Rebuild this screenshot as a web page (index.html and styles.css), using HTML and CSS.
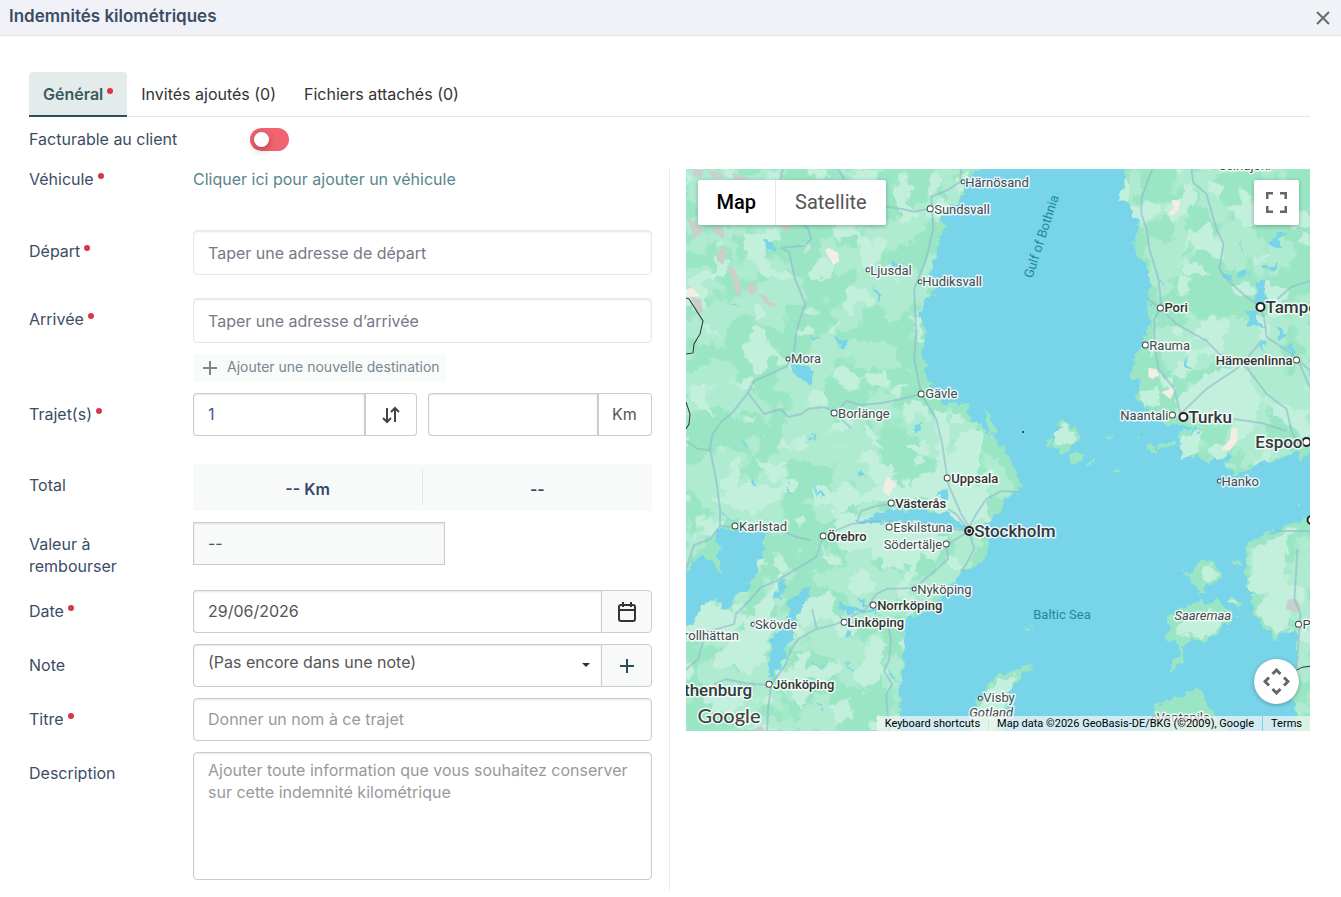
FILE: index.html
```html
<!DOCTYPE html>
<html lang="fr">

<head>
  <meta charset="UTF-8" />
  <meta name="viewport" content="width=device-width, initial-scale=1.0" />
  <title>Indemnités kilométriques</title>
  <link rel="stylesheet" href="styles.css">
</head>

<body>
  <header class="modal-header">
    <h1>Indemnités kilométriques</h1>
    <button type="button" class="close-btn" aria-label="Fermer">
      <svg width="14" height="14" viewBox="0 0 14 14"><path d="M1 1l12 12M13 1L1 13" /></svg>
    </button>
  </header>

  <main class="modal-body">
    <nav class="tabs">
      <a href="#general" class="tab active">Général<span class="required"></span></a>
      <a href="#invites" class="tab">Invités ajoutés (0)</a>
      <a href="#fichiers" class="tab">Fichiers attachés (0)</a>
    </nav>

    <div class="billable">
      <label for="billable">Facturable au client</label>
      <input type="checkbox" id="billable" class="switch" />
    </div>

    <div class="columns">
      <form class="form">
        <div class="row row-vehicle">
          <span class="label">Véhicule<span class="required"></span></span>
          <a href="#vehicule" class="add-vehicle">Cliquer ici pour ajouter un véhicule</a>
        </div>

        <div class="row row-address">
          <label class="label" for="start">Départ<span class="required"></span></label>
          <input type="text" id="start" class="control address" placeholder="Taper une adresse de départ" />
        </div>

        <div class="row">
          <label class="label" for="end">Arrivée<span class="required"></span></label>
          <div class="stack">
            <input type="text" id="end" class="control address" placeholder="Taper une adresse d’arrivée" />
            <button type="button" class="add-destination">
              <svg width="14" height="14" viewBox="0 0 14 14"><path d="M7 0v14M0 7h14" /></svg>
              Ajouter une nouvelle destination
            </button>
          </div>
        </div>

        <div class="row row-trips">
          <label class="label" for="trips">Trajet(s)<span class="required"></span></label>
          <div class="pair">
            <div class="group">
              <input type="text" id="trips" class="control trips" value="1" />
              <button type="button" class="addon double" aria-label="Aller-retour">
                <svg class="swap" width="20" height="18" viewBox="0 0 20 18"><path d="M6 2v14M2 12l4 4 4-4M14 16V2M10 6l4-4 4 4" /></svg>
              </button>
            </div>
            <div class="group">
              <input type="text" id="distance" class="control" aria-label="Distance" />
              <span class="addon double unit">Km</span>
            </div>
          </div>
        </div>

        <div class="row">
          <span class="label">Total</span>
          <div class="total">
            <span>-- Km</span>
            <span>--</span>
          </div>
        </div>

        <div class="row row-refund">
          <label class="label" for="refund">Valeur à rembourser</label>
          <div class="stack">
            <input type="text" id="refund" class="control refund" value="--" readonly />
          </div>
        </div>

        <div class="row">
          <label class="label" for="date">Date<span class="required"></span></label>
          <div class="group">
            <input type="text" id="date" class="control" value="29/06/2026" />
            <button type="button" class="addon tinted" aria-label="Calendrier">
              <svg class="calendar" width="20" height="20" viewBox="0 0 20 20"><rect x="2" y="3" width="16" height="16" rx="2" /><path d="M2 8h16M6 0v5M14 0v5" /></svg>
            </button>
          </div>
        </div>

        <div class="row">
          <label class="label" for="note">Note</label>
          <div class="group">
            <div class="select">
              <select id="note" class="control">
                <option>(Pas encore dans une note)</option>
              </select>
              <svg class="caret" width="8" height="4" viewBox="0 0 8 4"><path d="M0 0h8L4 4z" /></svg>
            </div>
            <button type="button" class="addon tinted" aria-label="Ajouter une note">
              <svg class="plus" width="14" height="14" viewBox="0 0 14 14"><path d="M7 0v14M0 7h14" /></svg>
            </button>
          </div>
        </div>

        <div class="row">
          <label class="label" for="title">Titre<span class="required"></span></label>
          <input type="text" id="title" class="control" placeholder="Donner un nom à ce trajet" />
        </div>

        <div class="row">
          <label class="label" for="description">Description</label>
          <textarea id="description" class="control" placeholder="Ajouter toute information que vous souhaitez conserver sur cette indemnité kilométrique"></textarea>
        </div>
      </form>

      <section class="map" aria-label="Carte">
        <svg class="map-canvas" viewBox="0 0 624 562" preserveAspectRatio="xMidYMid slice">
          <defs>
            <!-- uneven coastline -->
            <filter id="coast" x="0" y="0" width="100%" height="100%" color-interpolation-filters="sRGB">
              <feTurbulence type="fractalNoise" baseFrequency="0.12" numOctaves="2" seed="4" />
              <feDisplacementMap in="SourceGraphic" scale="12" xChannelSelector="R" yChannelSelector="G" />
            </filter>
            <!-- vegetation patches, two tones -->
            <filter id="patch-mid" x="0" y="0" width="100%" height="100%" color-interpolation-filters="sRGB">
              <feTurbulence type="fractalNoise" baseFrequency="0.02" numOctaves="3" seed="8" />
              <feColorMatrix values="0 0 0 0 0.686  0 0 0 0 0.922  0 0 0 0 0.82  24 0 0 0 -11.4" />
              <feComposite in2="SourceGraphic" operator="in" />
            </filter>
            <filter id="patch-light" x="0" y="0" width="100%" height="100%" color-interpolation-filters="sRGB">
              <feTurbulence type="fractalNoise" baseFrequency="0.035" numOctaves="2" seed="21" />
              <feColorMatrix values="0 0 0 0 0.765  0 0 0 0 0.941  0 0 0 0 0.867  24 0 0 0 -14.2" />
              <feComposite in2="SourceGraphic" operator="in" />
            </filter>
            <g id="land">
              <path d="M-10-10H300L293 0 280 18 272 33 257 38 250 32V50L260 58 252 67V83L247 97 245 110 253 122 237 128 234 147 239 160 237 177 240 207 245 215 242 223 250 232 267 235 280 232 282 245 292 257 306 265 320 283 326 297 334 315 332 324 318 331 314 344 302 353 296 366 306 376 296 391 284 401 274 405 265 412 258 425 243 441 223 448 217 462 218 484 217 502 213 520 215 538 211 575H-10z" />
              <path d="M442-10L437 13 442 25 440 33 454 47 449 67V83L459 97 464 113 465 130 460 143 462 157 457 163 459 173 450 183 445 207 454 212 450 227 459 242 470 247 484 257 495 254 512 260 505 290 525 292 529 280 545 287 540 300 548 307 559 303 575 293 595 290 609 283 615 290 640 275V-10z" />
              <path d="M640 345L602 353 589 363 562 373 560 393 559 417 570 420 562 430 569 443 579 460 590 468 605 460 618 462 612 480 609 500 605 513 609 540 610 575H640z" />
              <path d="M479 445L485 447 499 438 515 432 525 434 534 432 550 448 545 452 539 458 520 472 505 470 497 477 495 493 485 502 484 495 490 490 495 477 479 468 477 463 485 458z" />
              <path d="M489 402L504 404 517 388 529 395 537 407 532 413 520 417 519 423 512 425 505 407z" />
              <path d="M540 432L547 427 555 435 552 441zM543 392L553 392 554 398 545 397zM465 575L469 535 492 528 515 517 519 533 532 547 540 562V575z" />
              <path d="M347 495L335 497 333 503 312 506 299 522 288 535 283 547 281 575H312L322 540 325 520 337 507z" />
              <path d="M375 251L380 257 389 258 394 265 392 272 384 275 382 283 375 285 367 278 365 268 375 266zM358 270L364 266 365 276zM383 284L394 284 395 294 384 292zM400 293L411 287 408 295zM427 302L433 298 432 302zM450 270L454 269 453 274zM460 278L468 276 468 284 460 283zM470 275L488 272 486 279 471 280zM491 265L507 258 506 269 494 273zM421 266L424 265 424 271z" />
              <path d="M297 240L305 247 311 265 304 262zM310 330L322 326 312 338zM612 335L615 336 613 339zM340 456L346 458 345 461z" />
            </g>
            <clipPath id="patches-clip">
              <path d="M-10-10H286L272 33 254 50 248 97 234 147 239 220 280 236 330 320 292 366 298 386 258 419 220 450 213 520 211 575H-10zM445-10V40L455 60 455 90 470 125 462 190 465 240 510 262 510 286 550 302 610 282 640 272V-10zM640 350L602 357 564 380 562 416 570 440 590 463 612 457 608 575H640z" />
            </clipPath>
          </defs>

          <rect class="sea" width="624" height="562" />
          <g filter="url(#coast)">
            <use href="#land" class="land" />
            <g clip-path="url(#patches-clip)">
              <rect width="624" height="562" filter="url(#patch-mid)" />
              <rect width="624" height="562" filter="url(#patch-light)" />
            </g>
            <g class="land-light">
              <path d="M490 455L510 444 528 440 545 448 520 468 490 466zM512 402L524 396 534 406 520 414zM542 434L547 429 553 436zM331 506L312 512 290 538 286 562H310L320 530zM376 256L389 262 386 274 372 278 366 270z" />
              <path d="M247 240L262 245 260 275 264 290 275 262 295 262 296 285 288 315 284 330 300 345 280 362 262 360 240 330 220 325 232 308 250 300 252 270z" />
              <path d="M180 292L190 300 205 312 222 325 205 330 175 335 150 340 158 330 190 320 198 310zM150 345L235 352 262 372 250 392 235 385 228 405 215 390 200 400 190 380 160 382 150 372zM25 330L50 322 62 312 95 320 92 330 70 345 35 335z" />
              <path d="M175 255L188 278 196 282 190 268 178 252zM222 278L240 272 244 285 230 285z" />
              <path d="M490 230L520 205 556 195 575 235 545 252 515 250 490 250zM568 380L602 362 598 400 606 430 604 455 590 465 570 440 582 425 564 410zM452 220L470 218 474 235 458 240zM495 270L512 262 514 285 496 290z" />
              <path d="M50 470L95 402 85 450 80 490 60 505 50 495 30 500 30 485zM110 490L125 480 118 500 124 520 115 540 105 520zM20 430L60 450 40 470 0 470V440zM110 435L145 422 150 440 115 460z" />
              <path d="M445 20L442 35 432 30 440 8zM510 65L495 85 505 60zM496 96L512 92 524 108 500 105zM520 12L538 15 535 32 525 25zM515 155L535 150 525 168 505 170z" />
            </g>
            <g class="sea">
              <path d="M30 360L78 362 77 382 70 400 65 415 50 427 45 435 33 440 33 427 18 435 6 455-10 457V412L8 392 20 385 30 400 35 405z" />
              <path d="M103 434L124 416 122 432 112 445 106 468 95 496 86 511 82 508 86 472 90 460 100 458zM88 430L94 412 102 410 98 424z" />
              <path d="M172 354L200 342 233 340 267 347 278 358 292 360 280 364 255 355 213 352 190 354z" />
              <path d="M104 192L118 196 130 203 125 217 112 208zM79 70L90 75 88 84 80 79zM225 258L238 255 230 266zM262 320L250 325 258 330zM152 433L180 440 195 444 160 444zM172 428L184 436 173 433zM159 462L164 463 163 471 159 470z" />
              <path d="M148 167L162 172 160 180zM186 113L196 130 194 134zM208 92L216 95 208 98zM124 169L132 167 130 172zM46 133L54 138 46 135zM103 308L107 325 104 320zM130 315L136 328 134 330zM175 300L180 308 174 306zM65 308L70 318 66 315zM125 265L133 272 126 270zM58 270L61 279 58 276z" />
              <path d="M571 115L579 112 577 125 580 138 572 135zM553 100L562 108 549 106zM580 75L595 78 592 70 604 62 590 66zM592 95L585 103 575 97zM560 145L570 140 572 150 580 160 562 155zM590 155L600 165 595 172zM498 186L505 200 500 198zM600 175L612 185 605 186zM575 170L581 182 574 178zM553 70L556 82 553 80zM475 108L480 115 474 113zM535 102L548 112 540 110z" />
              <path d="M30 335L36 342 50 352 40 348zM125 490L140 500 130 496zM160 492L170 505 163 500zM200 500L215 515 202 506zM130 532L136 540 131 537zM245 395L256 405 250 400zM470 238L474 250 468 246z" />
            </g>
          </g>

          <g class="rock">
            <path d="M8 0L18 2 15 10 7 6zM22 2L35 4 38 9 26 9zM45 4L62 9 50 12zM0 48L10 55 18 62 8 70 5 58zM28 56L38 62 38 70 28 65zM30 86L37 77 41 86 37 96 31 92zM40 97L48 100 55 115 55 126 49 125 47 112zM60 120L65 113 71 118 70 124 65 126zM72 125L80 127 83 133 91 135 88 138 80 135zM5 128L15 130 17 142 12 146zM92 55L107 58 100 64zM600 435L602 430 612 432 614 441 610 443 599 440zM65 562L75 556 80 562z" />
            <path class="sand" d="M139 82L142 79 152 84 153 93 147 96zM485 31L494 32 492 42 486 47 482 44 488 39zM0 121L6 119 14 127 0 128zM462 199L470 200 473 206 466 210 462 208zM475 223L487 219 490 218 484 230zM545 260L551 259 551 272 543 282 535 280 544 270zM198 314L202 308 211 316 206 320 203 327 197 322z" />
          </g>

          <g class="road">
            <path d="M97 0L92 20 105 45 122 60 125 70 119 77 95 79 103 83 109 110 119 135 110 163 108 184 100 198 82 206 68 212 62 224 46 244 36 252 26 266 24 280 30 310 34 340 34 357 24 370 8 376 0 400" />
            <path d="M62 224L78 245 95 240 102 248 115 245 122 240 138 238 150 244 160 232 175 236 195 234 215 230 235 225M148 244L165 259M0 272L12 280 24 281M34 357L50 358M97 362L110 368 125 371M200 38L215 40 228 43 237 41 246 40 245 28 260 22 274 13 275 0M246 40L247 60 240 90 228 120 230 165 228 190 235 225 250 250 256 275 262 315 275 345 283 358 290 345 300 330 315 322 333 323" />
            <path d="M283 362L270 345 262 340M280 362L235 354 190 352 165 355 137 367 130 388 110 400 90 412 75 418 60 435 50 445 48 455 20 463M170 355L175 342 190 337 204 335M283 362L260 376 262 390 245 405 228 419 200 420 190 425 180 440 150 455 130 460 112 470 105 480 100 495 85 515 82 540 81 562M131 461L126 440M283 362L288 380 280 395 275 402M200 450L205 470 203 490 198 502 206 515 200 525 203 562M83 516L60 514 40 510 28 515M20 463L12 490 0 500M153 446L160 455" />
            <path d="M466 0L455 30 455 45 460 60 463 80 472 110 475 137 468 150 468 175 472 200 488 220 494 245M505 0L507 14 520 25 530 60 537 75 533 100 543 113 560 128 573 137 578 150 580 168 605 185 624 202M591 130L605 118 624 112M461 130L475 140 490 155 520 172 533 185 560 198 580 225 600 240 605 262 612 275M494 245L520 220 550 200 560 190 575 172M547 250L575 254 600 262M611 380L608 430 614 445 610 500M590 362L624 362M611 190L624 220" />
            <path d="M152 0L158 10" />
          </g>
          <path class="border" d="M0 129L3 130 17 152 14 165 8 175 7 184 0 185M0 233L4 245 3 255 0 260M610 501L616 498 624 497" />

          <g class="marker">
            <circle cx="277" cy="13" r="2" /><circle cx="244" cy="40" r="3" /><circle cx="182" cy="101" r="2" />
            <circle cx="234" cy="113" r="2" /><circle cx="102" cy="190" r="2" /><circle cx="235" cy="225" r="3" />
            <circle cx="148" cy="244" r="3" /><circle cx="261" cy="309" r="3" /><circle cx="205" cy="334" r="3" />
            <circle cx="203" cy="358" r="3" /><circle cx="49" cy="357" r="3" /><circle cx="137" cy="367" r="3" />
            <circle cx="260" cy="375" r="3" /><circle cx="228" cy="420" r="2" /><circle cx="187" cy="436" r="3" />
            <circle cx="158" cy="453" r="3" /><circle cx="67" cy="455" r="2" /><circle cx="83" cy="515" r="3" />
            <circle cx="294" cy="529" r="2" /><circle cx="474" cy="139" r="3" /><circle cx="459" cy="176" r="3" />
            <circle cx="610" cy="191" r="3" /><circle cx="486" cy="246" r="3" /><circle cx="533" cy="312" r="2" />
            <circle cx="612" cy="455" r="3" /><circle cx="468" cy="549" r="2" />
          </g>
          <g class="marker big">
            <circle cx="574" cy="138" r="4" /><circle cx="497" cy="248" r="4" /><circle cx="620" cy="273" r="4" />
            <circle cx="625" cy="351" r="4" /><circle cx="283" cy="362" r="4" />
          </g>
          <circle cx="283" cy="362" r="2" />
          <circle cx="337" cy="263" r="1" />

          <g class="place">
            <text x="279" y="18">Härnösand</text>
            <text x="248" y="45">Sundsvall</text>
            <text x="184" y="106">Ljusdal</text>
            <text x="236" y="117">Hudiksvall</text>
            <text x="105" y="194">Mora</text>
            <text x="239" y="229">Gävle</text>
            <text x="152" y="249">Borlänge</text>
            <text x="207" y="363">Eskilstuna</text>
            <text x="53" y="362">Karlstad</text>
            <text x="256" y="380" text-anchor="end">Södertälje</text>
            <text x="231" y="425">Nyköping</text>
            <text x="69" y="460">Skövde</text>
            <text x="-2" y="471">rollhättan</text>
            <text x="297" y="533">Visby</text>
            <text x="463" y="181">Rauma</text>
            <text x="482" y="251" text-anchor="end">Naantali</text>
            <text x="535" y="317">Hanko</text>
            <text x="616" y="460">Pärnu</text>
            <text x="532" y="1">Seinäjoki</text>
            <text x="470" y="553">Ventspils</text>
          </g>
          <g class="place town">
            <text x="265" y="314">Uppsala</text>
            <text x="209" y="339">Västerås</text>
            <text x="141" y="372">Örebro</text>
            <text x="191" y="441">Norrköping</text>
            <text x="161" y="458">Linköping</text>
            <text x="87" y="520">Jönköping</text>
            <text x="478" y="143">Pori</text>
            <text x="606" y="196" text-anchor="end">Hämeenlinna</text>
          </g>
          <g class="place city">
            <text x="288" y="368">Stockholm</text>
            <text x="502" y="254">Turku</text>
            <text x="616" y="279" text-anchor="end">Espoo</text>
            <text x="579" y="144">Tampere</text>
            <text x="-2" y="527">thenburg</text>
          </g>
          <g class="place island">
            <text x="488" y="451">Saaremaa</text>
            <text x="283" y="548">Gotland</text>
          </g>
          <g class="water-name">
            <text x="347" y="450">Baltic Sea</text>
            <text transform="translate(346 110) rotate(-72)">Gulf of Bothnia</text>
          </g>
        </svg>

        <div class="map-type">
          <button type="button" class="selected">Map</button>
          <button type="button">Satellite</button>
        </div>
        <button type="button" class="map-btn fullscreen" aria-label="Plein écran">
          <svg width="21" height="21" viewBox="0 0 21 21"><path d="M1 7V1h6M14 1h6v6M20 14v6h-6M7 20H1v-6" /></svg>
        </button>
        <button type="button" class="map-btn camera" aria-label="Commandes de la caméra">
          <svg width="27" height="27" viewBox="0 0 27 27"><path d="M9.500 6l4-4 4 4M9.500 21l4 4 4-4M6 9.500l-4 4 4 4M21 9.500l4 4-4 4" /></svg>
        </button>
        <span class="map-logo">Google</span>
        <div class="map-legal">
          <button type="button">Keyboard shortcuts</button>
          <span>Map data ©2026 GeoBasis-DE/BKG (©2009), Google</span>
          <a href="#terms">Terms</a>
        </div>
      </section>
    </div>
  </main>
</body>

</html>
```
FILE: styles.css
```css
* {
  box-sizing: border-box;
  margin: 0;
  padding: 0;
}

body {
  background: #fff;
  color: #3b4d66;
  font-family: Inter, 'Liberation Sans', sans-serif;
  font-size: 16px;
  line-height: 22px;
}

button,
input,
select,
textarea {
  font: inherit;
  color: inherit;
}

button {
  border: none;
  background: none;
  cursor: pointer;
}

a {
  text-decoration: none;
}

svg {
  fill: none;
  stroke: currentColor;
}

.modal-header {
  display: flex;
  justify-content: space-between;
  align-items: center;
  height: 36px;
  padding: 0 11px 3px 9px;
  background: #f1f2f8;
  border-bottom: 1px solid #e1e3e8;
}

.modal-header h1 {
  font-size: 17px;
  font-weight: 600;
}

.close-btn {
  display: flex;
  color: #6b6b6b;
  padding-top: 4px;
}

.close-btn svg {
  stroke-width: 2;
}

.modal-body {
  padding: 36px 31px 7px 29px;
}

/* Tabs */
.tabs {
  display: flex;
  box-shadow: inset 0 -1px #e6e8e8;
}

.tab {
  padding: 11px 14px 10px;
  border-bottom: 2px solid transparent;
  color: #333;
}

.tab.active {
  background: #e4eceb;
  border-bottom-color: #2d5052;
  border-radius: 4px 4px 0 0;
  color: #3a5a5c;
  font-weight: 600;
}

.required {
  display: inline-block;
  width: 6px;
  height: 6px;
  margin-left: 4px;
  border-radius: 50%;
  background: #dc3545;
  vertical-align: 6px;
}

.billable {
  display: flex;
  align-items: flex-start;
  padding: 11px 0 18px;
}

.billable label {
  width: 221px;
}

.switch {
  appearance: none;
  width: 39px;
  height: 23px;
  border-radius: 12px;
  background: #f1636f;
  padding: 4px;
  cursor: pointer;
}

.switch::before {
  content: '';
  display: block;
  width: 15px;
  height: 15px;
  border-radius: 50%;
  background: #fff;
  box-shadow: 0 3px 8px rgba(0, 0, 0, 0.3);
}

/* Form */
.columns {
  display: grid;
  grid-template-columns: 1fr 1fr;
}

.form {
  display: flex;
  flex-direction: column;
  gap: 11px;
  padding: 0 17px 10px 0;
  border-right: 1px solid #e8eaec;
}

.row {
  display: grid;
  grid-template-columns: 164px 1fr;
  align-items: start;
}

.label {
  padding: 10px 40px 0 0;
}

.row-vehicle {
  min-height: 50px;
  line-height: 20px;
}

.row-vehicle .label {
  padding-top: 0;
}

.add-vehicle {
  color: #56878a;
}

.row-address {
  margin-bottom: 12px;
}

.row-trips {
  margin-bottom: 17px;
}

.row-refund {
  min-height: 57px;
}

.row-refund .label {
  padding-top: 11px;
}

.stack {
  display: flex;
  flex-direction: column;
  align-items: flex-start;
  gap: 11px;
}

.control {
  width: 100%;
  height: 43px;
  padding: 0 14px 2px;
  border: 1px solid #ccc;
  border-radius: 4px;
  background: #fff;
  box-shadow: inset 0 1px 2px rgba(0, 0, 0, 0.1);
  color: #555;
  outline: none;
}

.control::placeholder {
  color: #999;
}

.control.address {
  height: 45px;
  padding-bottom: 0;
  border-color: #e1ebe8;
}

.address::placeholder {
  color: #7b7788;
}

.control.trips {
  color: #3d5a96;
}

.control.refund {
  width: 55%;
  border-radius: 0;
  background: #f8faf9;
}

textarea.control {
  display: block;
  height: 128px;
  padding: 6px 14px;
  resize: none;
}

.add-destination {
  display: flex;
  align-items: center;
  gap: 10px;
  height: 28px;
  padding: 0 6px 2px 10px;
  border-radius: 4px;
  background: #f9fbfb;
  color: #7a8691;
  font-size: 14px;
}

.add-destination svg {
  margin-top: 2px;
  stroke-width: 2;
}

.pair {
  display: grid;
  grid-template-columns: 1fr 1fr;
  gap: 11px;
}

.group {
  display: flex;
}

.group .control {
  flex: 1;
  min-width: 0;
  border-right: none;
  border-radius: 4px 0 0 4px;
}

.addon {
  display: flex;
  justify-content: center;
  align-items: center;
  flex: none;
  width: 51px;
  height: 43px;
  border: 1px solid #ccc;
  border-radius: 0 4px 4px 0;
  color: #444;
}

.addon.double {
  width: 53px;
  border-left-width: 2px;
}

.addon.unit {
  width: 55px;
  padding-bottom: 2px;
  color: #555;
}

.addon.tinted {
  padding-left: 1px;
  background: #f8faf9;
}

.swap,
.calendar,
.plus {
  stroke-width: 2;
}

.calendar {
  color: #333;
}

.plus {
  color: #2d5052;
}

.select {
  position: relative;
  flex: 1;
  display: flex;
}

.select select {
  appearance: none;
  padding-bottom: 8px;
}

.caret {
  position: absolute;
  right: 11px;
  top: 19px;
  fill: #333;
  stroke: none;
  pointer-events: none;
}

.total {
  display: grid;
  grid-template-columns: 1fr 1fr;
  padding: 6px 0;
  background: #f8faf9;
  color: #364966;
  font-weight: 600;
  text-align: center;
}

.total span {
  height: 35px;
  line-height: 39px;
}

.total span + span {
  border-left: 1px solid #e3e7e8;
}

/* Map */
.map {
  position: relative;
  height: 562px;
  margin-left: 16px;
  overflow: hidden;
  font-family: Roboto, sans-serif;
}

.map-canvas {
  display: block;
  width: 100%;
  height: 100%;
  stroke: none;
  fill: #222;
}

.sea {
  fill: #78d4e9;
}

.land {
  fill: #9ae6c4;
}

.land-light {
  fill: #c3f0dd;
}

.rock {
  fill: #c9cfca;
}

.sand {
  fill: #f3ede2;
}

.road {
  fill: none;
  stroke: #8fb9cb;
  stroke-width: 2;
  stroke-linejoin: round;
  stroke-opacity: 0.6;
}

.border {
  fill: none;
  stroke: #333;
}

.marker {
  fill: #fff;
  stroke: #444;
}

.marker.big {
  stroke: #222;
  stroke-width: 2;
}

.place {
  fill: #444b50;
  stroke: #fff;
  stroke-width: 3;
  stroke-opacity: 0.8;
  stroke-linejoin: round;
  paint-order: stroke;
  font-size: 13px;
}

.town {
  fill: #333;
  font-weight: 500;
}

.city {
  fill: #333a40;
  font-size: 17px;
  font-weight: 500;
}

.island {
  font-style: italic;
}

.water-name {
  fill: #1c8aa3;
  font-size: 13px;
}

.map-type {
  position: absolute;
  top: 11px;
  left: 12px;
  display: flex;
  border-radius: 2px;
  background: #fff;
  box-shadow: 0 1px 4px rgba(0, 0, 0, 0.3);
}

.map-type button {
  height: 45px;
  padding: 0 19px 2px;
  color: #565656;
  font-size: 20px;
}

.map-type .selected {
  border-right: 1px solid #e6e6e6;
  color: #000;
  font-weight: 500;
}

.map-btn {
  position: absolute;
  right: 11px;
  display: flex;
  justify-content: center;
  align-items: center;
  width: 45px;
  height: 45px;
  border-radius: 2px;
  background: #fff;
  box-shadow: 0 1px 4px rgba(0, 0, 0, 0.3);
  color: #666;
}

.map-btn svg {
  stroke-width: 3;
}

.fullscreen {
  top: 11px;
}

.camera {
  bottom: 27px;
  border-radius: 50%;
}

.map-logo {
  position: absolute;
  left: 12px;
  bottom: 4px;
  color: #444;
  font-family: Lato, sans-serif;
  font-size: 20px;
  font-weight: 500;
  line-height: 24px;
  -webkit-text-stroke: 3px rgba(255, 255, 255, 0.8);
  paint-order: stroke;
}

.map-legal {
  position: absolute;
  right: 0;
  bottom: 0;
  display: flex;
  color: #000;
  font-size: 11px;
  line-height: 15px;
  white-space: nowrap;
}

.map-legal > * {
  padding: 0 8px;
  background: rgba(245, 245, 245, 0.7);
  color: #000;
  line-height: 15px;
}

.map-legal > * + * {
  margin-left: 1px;
}
```
